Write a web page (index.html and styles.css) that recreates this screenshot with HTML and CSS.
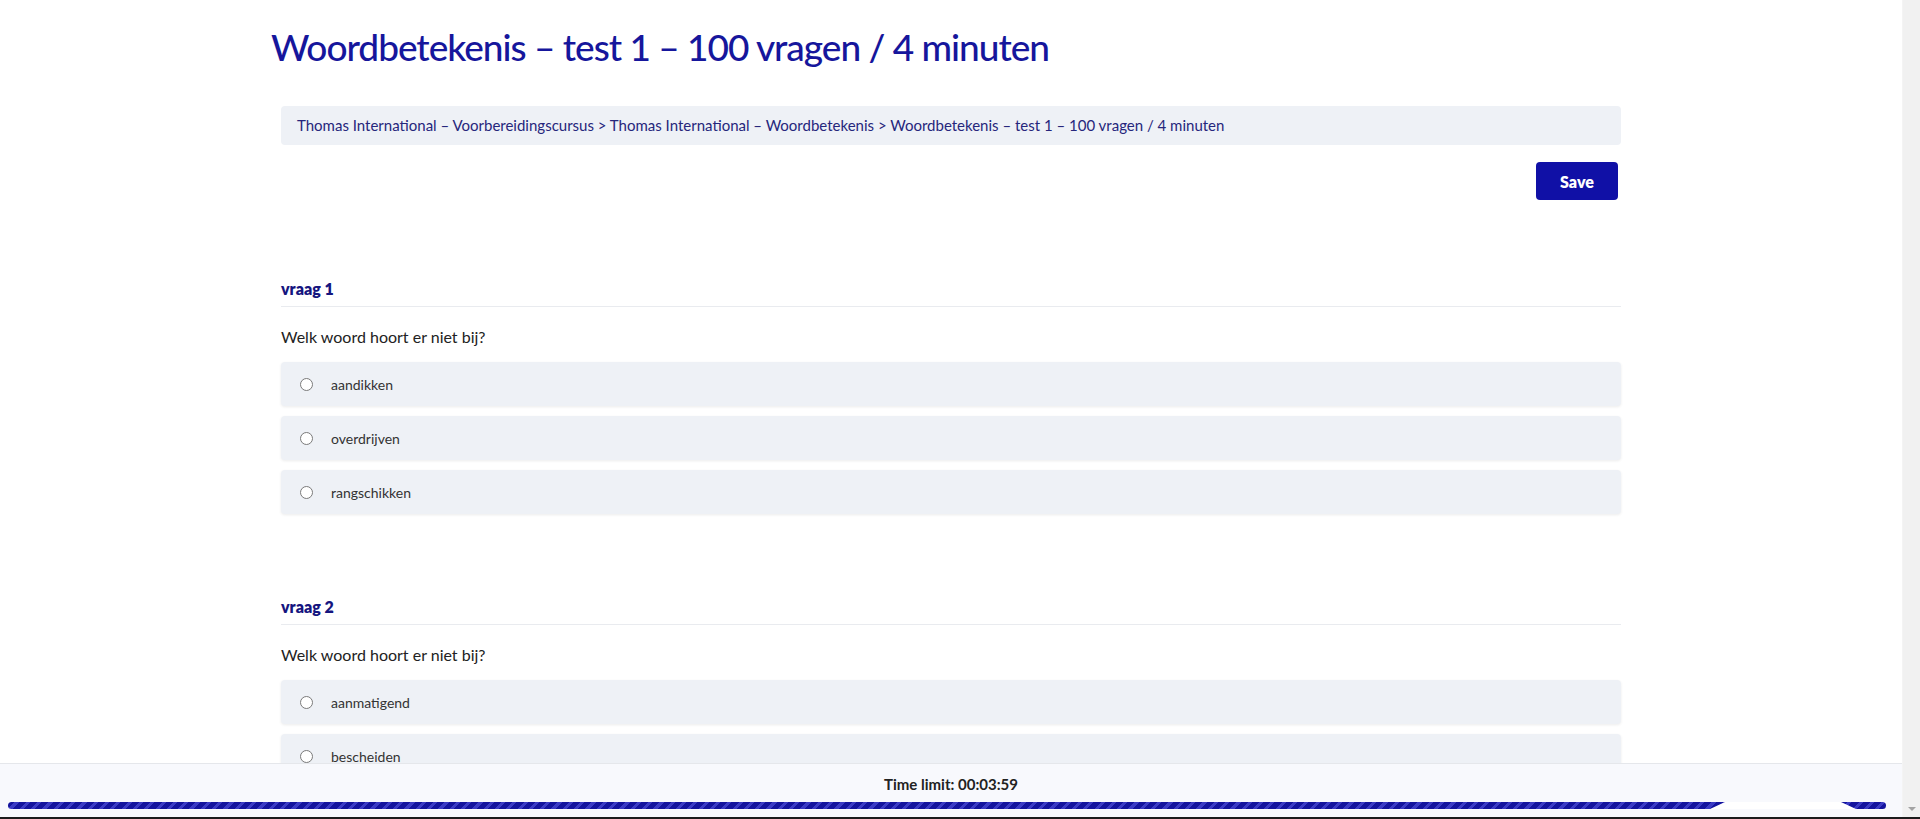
FILE: index.html
```html
<!DOCTYPE html>
<html lang="nl">
<head>
<meta charset="utf-8">
<title>Woordbetekenis – test 1</title>
<link rel="stylesheet" href="styles.css">
</head>
<body>
<div class="screen">
  <div class="viewport">
    <main class="content">
      <h1 class="title">Woordbetekenis – test 1 – 100 vragen / 4 minuten</h1>
      <nav class="breadcrumb">Thomas International – Voorbereidingscursus &gt; Thomas International – Woordbetekenis &gt; Woordbetekenis – test 1 – 100 vragen / 4 minuten</nav>
      <div class="actions"><button class="save" type="button">Save</button></div>

      <section class="question">
        <h2 class="q-title">vraag 1</h2>
        <p class="q-text">Welk woord hoort er niet bij?</p>
        <ul class="options">
          <li class="option"><span class="radio"></span><span>aandikken</span></li>
          <li class="option"><span class="radio"></span><span>overdrijven</span></li>
          <li class="option"><span class="radio"></span><span>rangschikken</span></li>
        </ul>
      </section>

      <section class="question">
        <h2 class="q-title">vraag 2</h2>
        <p class="q-text">Welk woord hoort er niet bij?</p>
        <ul class="options">
          <li class="option"><span class="radio"></span><span>aanmatigend</span></li>
          <li class="option"><span class="radio"></span><span>bescheiden</span></li>
          <li class="option"><span class="radio"></span><span>verwaand</span></li>
        </ul>
      </section>
    </main>

    <footer class="timer">
      <div class="timer-label">Time limit: 00:03:59</div>
      <div class="progress">
        <div class="progress-fill" style="width:99.58%"><span class="sheen"></span></div>
      </div>
    </footer>
  </div>
  <div class="scrollbar"><span class="arrow-down"></span></div>
</div>
<div class="edge"></div>
</body>
</html>
```

FILE: styles.css
```css
html, body {
  margin: 0;
  height: 100%;
  overflow: hidden;
}

body {
  display: flex;
  flex-direction: column;
  background: #ffffff;
  font-family: Lato, "Noto Sans", sans-serif;
}

.screen {
  flex: 1;
  display: flex;
  min-height: 0;
}

.viewport {
  flex: 1;
  position: relative;
  overflow: hidden;
  border-right: 1px solid #f4f4f4;
}

.scrollbar {
  width: 17px;
  background: #f1f1f1;
  display: flex;
  flex-direction: column;
  justify-content: flex-end;
  align-items: center;
  padding-bottom: 6px;
}

.arrow-down {
  width: 0;
  height: 0;
  border-left: 4px solid transparent;
  border-right: 4px solid transparent;
  border-top: 4px solid #a3a3a3;
}

.edge {
  height: 2px;
  background: #1c1c1c;
}

.content {
  width: 1340px;
  margin: 0 auto;
}

.title {
  margin: 0 0 0 -10px;
  padding-top: 23px;
  font-size: 37px;
  line-height: 48px;
  letter-spacing: -1px;
  font-weight: 500;
  color: #16169c;
}

.breadcrumb {
  margin-top: 35px;
  height: 39px;
  line-height: 39px;
  padding: 0 16px;
  background: #eef1f6;
  border-radius: 4px;
  font-size: 15px;
  color: #26267c;
}

.actions {
  display: flex;
  justify-content: flex-end;
  margin-top: 17px;
  padding-right: 3px;
}

.save {
  width: 82px;
  height: 38px;
  border: 0;
  border-radius: 4px;
  background: #1010a6;
  color: #ffffff;
  font-family: Lato, "Noto Sans", sans-serif;
  font-weight: 800;
  font-size: 16px;
}

.question {
  margin-top: 79px;
}

.question + .question {
  margin-top: 83px;
}

.q-title {
  margin: 0;
  padding-bottom: 7px;
  border-bottom: 1px solid #e9ebef;
  font-size: 16px;
  line-height: 20px;
  font-weight: 800;
  color: #15157f;
}

.q-text {
  margin: 19px 0 0;
  font-size: 16px;
  line-height: 22px;
  color: #222222;
}

.options {
  list-style: none;
  margin: 14px 0 0;
  padding: 0;
  display: flex;
  flex-direction: column;
  gap: 10px;
}

.option {
  height: 44px;
  display: flex;
  align-items: center;
  padding-left: 19px;
  background: #eef1f6;
  border-radius: 4px;
  box-shadow: 0 1px 3px rgba(0, 0, 0, 0.08);
  font-size: 14px;
  color: #333333;
}

.radio {
  width: 11px;
  height: 11px;
  border: 1px solid #7a7a7a;
  border-radius: 50%;
  background: #ffffff;
  margin-right: 18px;
  flex: none;
}

.timer {
  position: absolute;
  left: 0;
  right: 0;
  bottom: 0;
  height: 53px;
  background: #f8f9fd;
  border-top: 1px solid #e5e7eb;
  display: flex;
  flex-direction: column;
  align-items: center;
}

.timer-label {
  margin-top: 10px;
  font-size: 15px;
  line-height: 20px;
  font-weight: 700;
  color: #222222;
}

.progress {
  align-self: stretch;
  margin: 8px 8px 0;
  height: 7px;
  border-radius: 4px;
}

.progress-fill {
  position: relative;
  height: 100%;
  border-radius: 4px;
  overflow: hidden;
  background: repeating-linear-gradient(-45deg, #14149e 0 5px, #3a3ac4 5px 8px);
}

.sheen {
  position: absolute;
  top: 0;
  bottom: 0;
  left: 1702px;
  width: 146px;
  background: #ffffff;
  clip-path: polygon(15px 0, 131px 0, 146px 100%, 0 100%);
}
```
